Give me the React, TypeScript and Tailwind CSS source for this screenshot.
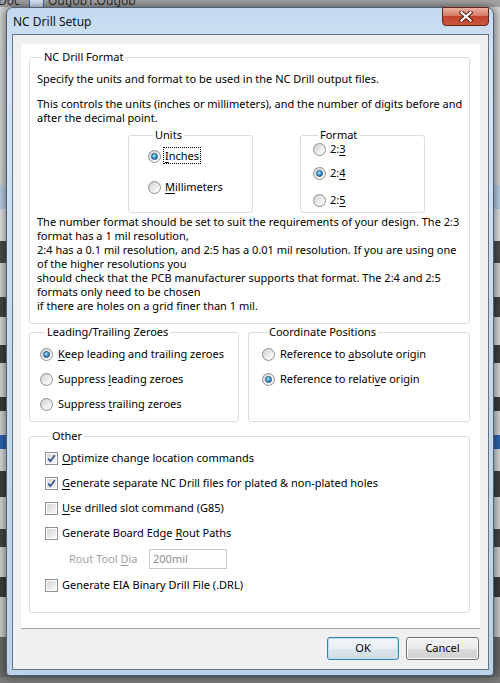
import React from 'react';

type Kids = { children?: React.ReactNode };

// access-key letter, underlined as Windows draws it
function K({ children }: Kids) {
  return <span className="underline decoration-1 underline-offset-[2px]">{children}</span>;
}

function RadioDot({ checked }: { checked?: boolean }) {
  return (
    <span className="flex h-[13px] w-[13px] shrink-0 items-center justify-center rounded-full border border-[#8e8f8f] bg-[linear-gradient(135deg,#cfcfcf,#f4f4f4_70%,#ffffff)]">
      {checked && (
        <span className="h-[7px] w-[7px] rounded-full border border-[#1d5586] bg-[radial-gradient(circle_at_40%_35%,#b8ecff,#3d9ad8_50%,#0e4a7e)]" />
      )}
    </span>
  );
}

function Radio({
  checked,
  children,
  gap = 'ml-[5px]',
  row = 'h-[18px]',
}: Kids & { checked?: boolean; gap?: string; row?: string }) {
  return (
    <div className={`flex items-center ${row}`}>
      <RadioDot checked={checked} />
      <span className={`${gap} whitespace-nowrap`}>{children}</span>
    </div>
  );
}

function CheckBox({ checked, children }: Kids & { checked?: boolean }) {
  return (
    <div className="flex h-[18px] items-center">
      <span className="flex h-[13px] w-[13px] shrink-0 border border-[#8e8f8f] bg-white p-[1px]">
        <span className="flex h-full w-full items-center justify-center bg-[linear-gradient(135deg,#d6d6d6,#f7f7f7)]">
          {checked && (
            <svg width="9" height="9" viewBox="0 0 9 9">
              <path d="M1.2 4.6 L3.4 7.2 L7.8 1.2" fill="none" stroke="#3b4f93" strokeWidth="1.7" />
            </svg>
          )}
        </span>
      </span>
      <span className="ml-[4px] whitespace-nowrap">{children}</span>
    </div>
  );
}

function Group({
  title,
  className,
  legend = 'leading-[14px]',
  children,
}: Kids & { title: string; className?: string; legend?: string }) {
  return (
    <fieldset className={`rounded-[3px] border border-[#d5dfe5] ${className ?? ''}`}>
      <legend className={`ml-[5px] px-[2px] ${legend}`}>{title}</legend>
      {children}
    </fieldset>
  );
}

const bands: [number, string][] = [
  [7, '#a2a2a2'],
  [178, '#d2d2d2'],
  [24, '#b8cde2'],
  [32, '#e0e0e0'],
  [22, '#4c4c4c'],
  [34, '#cfcfcf'],
  [20, '#444444'],
  [28, '#d6d6d6'],
  [18, '#3f3f3f'],
  [34, '#d4d4d4'],
  [14, '#3a3a3a'],
  [24, '#d0d0d0'],
  [14, '#2d64b0'],
  [22, '#d6d6d6'],
  [26, '#404040'],
  [32, '#d2d2d2'],
  [18, '#444444'],
  [30, '#d0d0d0'],
  [20, '#3c3c3c'],
  [40, '#cbcbcb'],
  [40, '#6a6a6a'],
];

function Backdrop() {
  return (
    <div className="absolute inset-0 flex flex-col">
      {bands.map(([h, c], i) => (
        <div key={i} className="shrink-0" style={{ height: h, backgroundColor: c }} />
      ))}
      <div className="absolute left-[-2px] top-[-8px] flex items-center text-[12px] text-[#2a2a2a]">
        <span className="w-[31px]">Doc</span>
        <span className="h-[13px] w-[15px] border border-[#3b6bb5] bg-[#dbe8f7]" />
        <span className="ml-[4px]">OutJob1.OutJob</span>
      </div>
    </div>
  );
}

export default function App() {
  return (
    <div className="relative h-[683px] w-[500px] overflow-hidden bg-[#7b7b7b] font-['Noto_Sans',sans-serif] text-[11px] text-black">
      <Backdrop />

      {/* dialog window */}
      <div className="absolute left-[6px] top-[7px] flex h-[669px] w-[488px] flex-col rounded-t-[7px] rounded-b-[4px] border border-[#4f6176] bg-[linear-gradient(180deg,#c2d8ee,#d6e6f5_8%,#c9dcef_40%,#bcd2e9)] pb-[5px] pl-[5px] pr-[4px] shadow-[0_0_10px_rgba(0,0,0,0.6)]">
        <div className="flex h-[27px] items-center pl-[1px] text-[12px] text-[#111]">NC Drill Setup</div>

        <div className="absolute right-[4px] top-[-1px] flex h-[19px] w-[47px] items-center justify-center rounded-b-[4px] border border-[#6b2418] bg-[linear-gradient(180deg,#eab1a3,#d77a66_45%,#c2432b_50%,#c9583f)]">
          <svg width="14" height="11" viewBox="0 0 14 11">
            <path d="M2.5 1.5 L11.5 9.5 M11.5 1.5 L2.5 9.5" stroke="#4a1a12" strokeWidth="4" strokeLinecap="square" />
            <path d="M2.5 1.5 L11.5 9.5 M11.5 1.5 L2.5 9.5" stroke="#ffffff" strokeWidth="2.2" strokeLinecap="square" />
          </svg>
        </div>

        {/* client area */}
        <div className="-mt-[1px] flex flex-1 flex-col border border-[#647689] bg-[#f0f0f0]">
          <div className="mx-[8px] mt-[9px] flex h-[585px] flex-col border-b border-[#a3a3a3] bg-white pl-[8px] pt-[6px]">
            <Group title="NC Drill Format" className="h-[274px] w-[441px] pl-[7px]">
              <p className="pt-[8px] leading-[14px]">Specify the units and format to be used in the NC Drill output files.</p>
              <p className="mt-[11px] leading-[14px] whitespace-nowrap">
                This controls the units (inches or millimeters), and the number of digits before and
                <br />
                after the decimal point.
              </p>

              <div className="mt-[3px] flex items-start gap-[47px] pl-[91px]">
                <Group title="Units" className="h-[85px] w-[125px] pl-[19px]">
                  <div className="mt-[5px]">
                    <Radio checked gap="ml-[2px]">
                      <span className="border border-dotted border-black px-[1px] leading-[13px]">
                        <K>I</K>nches
                      </span>
                    </Radio>
                  </div>
                  <div className="mt-[13px]">
                    <Radio gap="ml-[4px]">
                      <K>M</K>illimeters
                    </Radio>
                  </div>
                </Group>
                <Group title="Format" legend="leading-[10px]" className="mt-[2px] h-[83px] w-[125px] pl-[12px]">
                  <div className="mt-[3px]">
                    <Radio gap="ml-[4px]" row="h-[12px]">
                      2:<K>3</K>
                    </Radio>
                  </div>
                  <div className="mt-[12px]">
                    <Radio checked gap="ml-[4px]" row="h-[12px]">
                      2:<K>4</K>
                    </Radio>
                  </div>
                  <div className="mt-[15px]">
                    <Radio gap="ml-[4px]" row="h-[12px]">
                      2:<K>5</K>
                    </Radio>
                  </div>
                </Group>
              </div>

              <div className="mt-[2px] flex flex-col leading-[14px] whitespace-nowrap">
                <span>The number format should be set to suit the requirements of your design. The 2:3</span>
                <span>format has a 1 mil resolution,</span>
                <span>2:4 has a 0.1 mil resolution, and 2:5 has a 0.01 mil resolution. If you are using one</span>
                <span>of the higher resolutions you</span>
                <span>should check that the PCB manufacturer supports that format. The 2:4 and 2:5</span>
                <span>formats only need to be chosen</span>
                <span>if there are holes on a grid finer than 1 mil.</span>
              </div>
            </Group>

            <div className="mt-[1px] flex gap-[9px]">
              <Group title="Leading/Trailing Zeroes" className="h-[97px] w-[210px] pl-[10px]">
                <div className="mt-[6px] flex flex-col gap-[7px]">
                  <Radio checked>
                    <K>K</K>eep leading and trailing zeroes
                  </Radio>
                  <Radio>
                    Suppress <K>l</K>eading zeroes
                  </Radio>
                  <Radio>
                    Suppress <K>t</K>railing zeroes
                  </Radio>
                </div>
              </Group>
              <Group title="Coordinate Positions" className="h-[97px] w-[222px] pl-[13px]">
                <div className="mt-[6px] flex flex-col gap-[7px]">
                  <Radio>
                    Reference to <K>a</K>bsolute origin
                  </Radio>
                  <Radio checked>
                    Reference to relati<K>v</K>e origin
                  </Radio>
                </div>
              </Group>
            </div>

            <Group title="Other" className="mt-[7px] h-[184px] w-[441px] pl-[15px]">
              <div className="mt-[6px] flex flex-col gap-[7px]">
                <CheckBox checked>
                  <K>O</K>ptimize change location commands
                </CheckBox>
                <CheckBox checked>
                  <K>G</K>enerate separate NC Drill files for plated &amp; non-plated holes
                </CheckBox>
                <CheckBox>
                  <K>U</K>se drilled slot command (G85)
                </CheckBox>
                <CheckBox>
                  Generate Board Edge <K>R</K>out Paths
                </CheckBox>
                <div className="flex h-[20px] items-center pl-[24px]">
                  <span className="w-[80px] text-[#a2a2a2]">
                    Rout Tool <K>D</K>ia
                  </span>
                  <span className="flex h-[20px] w-[78px] items-center border border-[#c8c8c8] bg-white pl-[3px] text-[#8e8e8e]">
                    200mil
                  </span>
                </div>
                <CheckBox>Generate EIA Binary Drill File (.DRL)</CheckBox>
              </div>
            </Group>
          </div>

          <div className="mt-[8px] flex justify-end gap-[7px] pr-[9px] text-[11px]">
            <button className="h-[23px] w-[72px] rounded-[3px] border border-[#3c7fb1] bg-[linear-gradient(180deg,#f3f7fa,#e9eff4_50%,#dbe5ec_50%,#d2dde6)] shadow-[inset_0_0_0_1px_#b5e2f7]">
              OK
            </button>
            <button className="h-[23px] w-[73px] rounded-[3px] border border-[#707070] bg-[linear-gradient(180deg,#f2f2f2,#ebebeb_50%,#dddddd_50%,#cfcfcf)] shadow-[inset_0_0_0_1px_#fbfbfb]">
              Cancel
            </button>
          </div>
        </div>
      </div>
    </div>
  );
}
